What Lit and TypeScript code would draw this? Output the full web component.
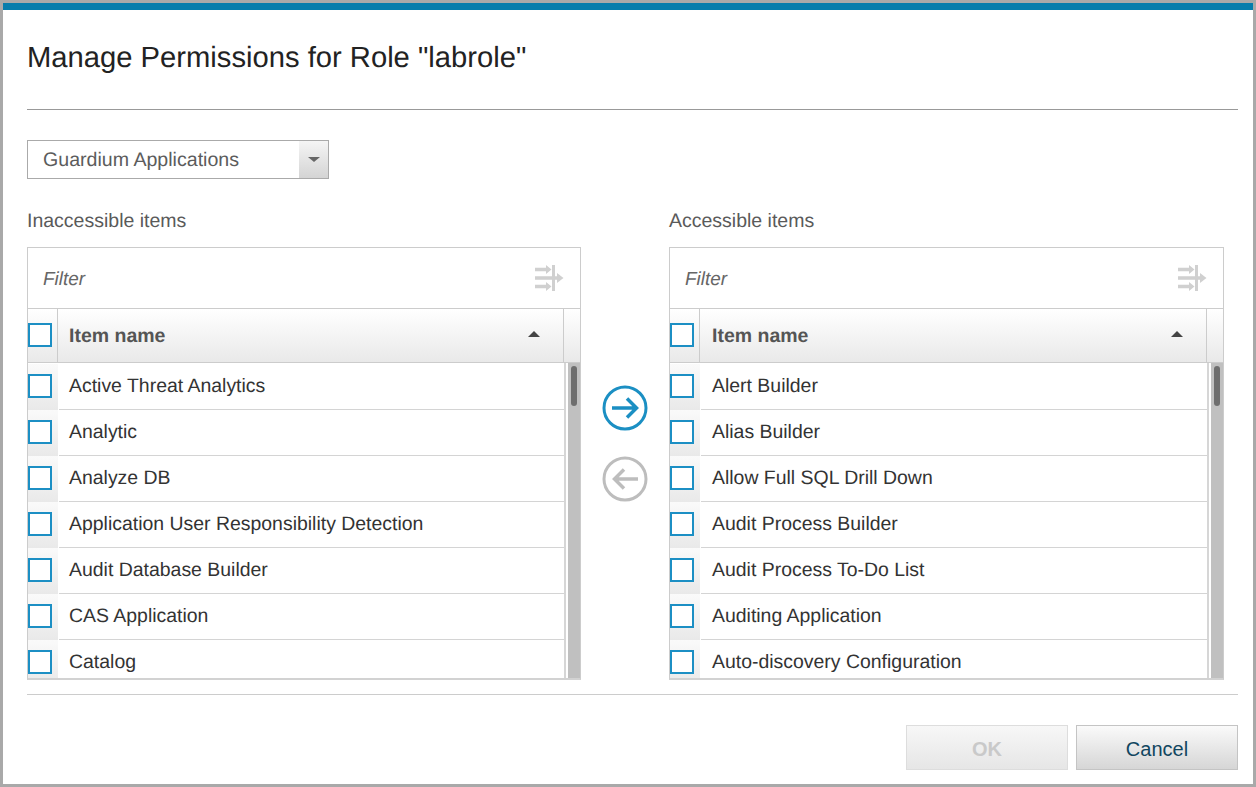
import { LitElement, html, css, svg } from "lit";
import { customElement } from "lit/decorators.js";

const LEFT = ["Active Threat Analytics", "Analytic", "Analyze DB", "Application User Responsibility Detection", "Audit Database Builder", "CAS Application", "Catalog"];
const RIGHT = ["Alert Builder", "Alias Builder", "Allow Full SQL Drill Down", "Audit Process Builder", "Audit Process To-Do List", "Auditing Application", "Auto-discovery Configuration"];

const filterIcon = svg`<svg class="ficon" width="30" height="28" viewBox="0 0 30 28" fill="none" stroke="#d0d0d0" stroke-width="3.500">
  <path d="M1 5.500H13M1 14H23M1 22.500H13"/>
  <path d="M19.500 1V27" stroke-width="3"/>
  <path d="M12 1l5.500 4.500-5.500 4.500zM12 18l5.500 4.500-5.500 4.500z" fill="#d0d0d0" stroke="none"/>
  <path d="M23 9l6.500 5-6.500 5z" fill="#d0d0d0" stroke="none"/>
</svg>`;

@customElement("app-root")
export class AppRoot extends LitElement {
  static styles = css`
    :host { display: block; font-family: "Liberation Sans", Arial, sans-serif; text-rendering: geometricPrecision; }
    * { box-sizing: border-box; }
    .dialog { width: 1256px; height: 787px; border: 3px solid #a9a9a9; background: #fff; display: flex; flex-direction: column; overflow: hidden; }
    .bar { height: 7px; background: #067dac; flex: none; }
    .content { flex: 1; padding: 0 15px 0 24px; display: flex; flex-direction: column; }
    h1 { margin: 0; height: 100px; padding-top: 31px; font-size: 29.200px; line-height: 34px; font-weight: 400; color: #222; border-bottom: 1px solid #999; white-space: nowrap; }
    .select { margin-top: 30px; width: 302px; height: 39px; border: 1px solid #aaa; display: flex; flex: none; }
    .select span { flex: 1; padding-left: 15px; font-size: 19.600px; line-height: 38px; color: #5c5c5c; }
    .select i { width: 29px; background: linear-gradient(#f5f5f5, #d4d4d4); display: flex; align-items: center; justify-content: center; }
    .select i::after { content: ""; border: 6px solid transparent; border-top: 5px solid #666; border-bottom: 0; }
    .lists { margin-top: 28px; display: flex; flex: none; }
    .side { display: flex; flex-direction: column; }
    .side.l { width: 554px; }
    .side.r { width: 555px; }
    .label { height: 40px; font-size: 19.500px; line-height: 29px; color: #5a5a5a; }
    .panel { height: 433px; border: 1px solid #ccc; border-bottom: 2px solid #d2d2d2; display: flex; flex-direction: column; overflow: hidden; }
    .filter { height: 61px; flex: none; border-bottom: 1px solid #ccc; display: flex; align-items: center; justify-content: space-between; padding: 4px 3px 0 15px; font-size: 18.900px; font-style: italic; color: #666; }
    .ficon { margin-right: 13px; margin-top: -4px; }
    .head { height: 54px; flex: none; display: flex; background: linear-gradient(#fff, #e9e9e9); border-bottom: 1px solid #ccc; }
    .check { width: 30px; flex: none; background: linear-gradient(#fafafa, #e9e9e9); display: flex; align-items: flex-start; }
    .head .check { border-right: 1px solid #ccc; padding-top: 14px; background: none; }
    .box { width: 24px; height: 24px; border: 2px solid #1c8fc4; background: #fff; }
    .name { flex: 1; padding-left: 11px; font-size: 19.500px; line-height: 54px; font-weight: 700; color: #555; display: flex; align-items: flex-start; justify-content: space-between; }
    .sort { width: 0; height: 0; border: 6px solid transparent; border-bottom: 6px solid #444; border-top: 0; margin-right: 23px; margin-top: 22px; }
    .corner { width: 17px; flex: none; border-left: 1px solid #ccc; }
    .body { flex: 1; min-height: 0; display: flex; overflow: hidden; }
    .rows { flex: 1; min-width: 0; overflow: hidden; border-right: 2px solid #d6d6d6; padding-top: 1px; }
    .row { height: 46px; display: flex; }
    .row .check { padding-top: 10px; }
    .row .text { flex: 1; margin-left: 1px; padding-left: 10px; border-bottom: 1px solid #d4d4d4; font-size: 19.450px; line-height: 44px; color: #333; white-space: nowrap; }
    .r .row .text { padding-left: 11px; }
    .track { width: 12px; flex: none; margin-left: 2px; background: #c0c0c0; padding: 3px 0 0 3px; }
    .thumb { width: 6px; height: 40px; border-radius: 3px; background: #6e6e6e; }
    .r .name { padding-left: 12px; }
    .arrows { width: 88px; flex: none; display: flex; flex-direction: column; align-items: center; padding-top: 178px; gap: 25px; }
    .foot { margin-top: 14px; border-top: 1px solid #ccc; padding-top: 30px; display: flex; justify-content: flex-end; gap: 8px; }
    button { height: 45px; font: inherit; font-size: 20px; padding: 4px 0 0; border: 1px solid #c4c4c4; }
    .ok { width: 162px; border-color: #ddd; background: linear-gradient(#f7f7f7, #e6e6e6); color: #c9c9c9; font-weight: 700; }
    .cancel { width: 162px; background: linear-gradient(#fafafa, #d6d6d6); color: #11465f; }
  `;

  private list(cls: string, title: string, items: string[]) {
    return html`<div class="side ${cls}">
      <div class="label">${title}</div>
      <div class="panel">
        <div class="filter"><span>Filter</span>${filterIcon}</div>
        <div class="head">
          <div class="check"><div class="box"></div></div>
          <div class="name">Item name<span class="sort"></span></div>
          <div class="corner"></div>
        </div>
        <div class="body">
          <div class="rows">
            ${items.map((t) => html`<div class="row"><div class="check"><div class="box"></div></div><div class="text">${t}</div></div>`)}
          </div>
          <div class="track"><div class="thumb"></div></div>
        </div>
      </div>
    </div>`;
  }

  render() {
    return html`<div class="dialog">
      <div class="bar"></div>
      <div class="content">
        <h1>Manage Permissions for Role "labrole"</h1>
        <div class="select"><span>Guardium Applications</span><i></i></div>
        <div class="lists">
          ${this.list("l", "Inaccessible items", LEFT)}
          <div class="arrows">
            <svg width="46" height="46" viewBox="0 0 46 46" fill="none" stroke="#1b8fc3" stroke-width="3"><circle cx="23" cy="23" r="21"/><path d="M10 23H34M25 13.500L34.500 23L25 32.500" stroke-width="3.500"/></svg>
            <svg width="46" height="46" viewBox="0 0 46 46" fill="none" stroke="#bdbdbd" stroke-width="3"><circle cx="23" cy="23" r="21"/><path d="M36 23H12.500M22 13.500L12.500 23L22 32.500" stroke-width="3.500"/></svg>
          </div>
          ${this.list("r", "Accessible items", RIGHT)}
        </div>
        <div class="foot">
          <button class="ok">OK</button>
          <button class="cancel">Cancel</button>
        </div>
      </div>
    </div>`;
  }
}
